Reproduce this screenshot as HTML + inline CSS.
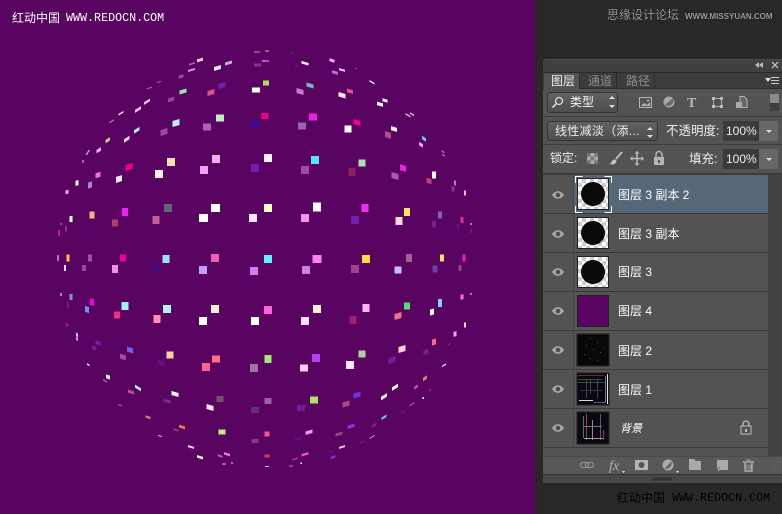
<!DOCTYPE html>
<html><head><meta charset="utf-8">
<style>
*{margin:0;padding:0;box-sizing:border-box}
html,body{width:782px;height:514px;overflow:hidden;background:#282828}
body{position:relative;font-family:"Liberation Sans","WenQuanYi Zen Hei","Noto Sans CJK SC",sans-serif}
.a{position:absolute}
.t{position:absolute;white-space:pre;font-size:12px;line-height:14px;color:#e8e8e8}
.l{color:#fff}
.row{position:absolute;left:543px;width:225px;height:39px;background:#535353;border-bottom:1px solid #3a3a3a}
.sel{position:absolute;left:31px;top:0;width:194px;height:38px;background:#566878}
.vl{position:absolute;left:30px;top:0;width:1px;height:38px;background:#444}
.th{position:absolute;left:577px;width:32px;height:32px;border:1px solid #222}
.chk{background-color:#fff;background-image:linear-gradient(45deg,#ccc 25%,transparent 25%,transparent 75%,#ccc 75%),linear-gradient(45deg,#ccc 25%,transparent 25%,transparent 75%,#ccc 75%);background-size:8px 8px;background-position:0 0,4px 4px}
.ci{position:absolute;left:3px;top:3px;width:24px;height:24px;border-radius:50%;background:#0a0a0a}
.box{position:absolute;border:1px solid #333;border-radius:3px;background:linear-gradient(#616161,#4e4e4e)}
svg{position:absolute;overflow:visible}
#s rect{transform-box:fill-box;transform-origin:center}
.u{transform:skewY(-16deg)}.d{transform:skewY(16deg)}.uu{transform:skewY(-32deg)}.dd{transform:skewY(32deg)}
</style></head><body>
<div class="a" style="left:0;top:0;width:534px;height:514px;background:#5a0462"></div>
<div class="a" style="left:534px;top:0;width:3px;height:514px;background:#2f2030"></div>
<div class="t" style="left:12px;top:11px;color:#fff;font-size:12px;line-height:14px">红动中国</div>
<div class="t" style="left:66px;top:11px;color:#fff;font-family:'Liberation Mono',monospace;font-size:11.7px;line-height:14px">WWW.REDOCN.COM</div>

<svg id="s" width="534" height="514" style="left:0;top:0">
<rect class="u" x="197" y="58.500" width="6" height="3" fill="#ffc0d0"/>
<rect class="u" x="189" y="63" width="6" height="1.500" fill="#c060c0"/>
<rect class="u" x="188" y="69" width="7" height="2" fill="#c0a0f0"/>
<rect class="u" x="225" y="61.500" width="7" height="3" fill="#c0b0c8"/>
<rect class="u" x="214" y="66" width="7" height="4" fill="#d8e8ff"/>
<rect x="254" y="51.500" width="6" height="1" fill="#d080b0"/>
<rect x="254" y="63.500" width="7" height="3" fill="#903080"/>
<rect x="262" y="60" width="3" height="2" fill="#e040e0"/>
<rect class="u" x="178.500" y="75" width="5" height="3" fill="#a05090"/>
<rect class="u" x="179.500" y="89.500" width="7" height="4" fill="#90e8b0"/>
<rect class="u" x="218.500" y="83" width="7" height="5" fill="#7020b0"/>
<rect class="u" x="207.500" y="90" width="7" height="5" fill="#e05080"/>
<rect x="252" y="87.500" width="8" height="5" fill="#fff"/>
<rect x="263" y="80.500" width="6" height="5" fill="#b0e060"/>
<rect class="u" x="168" y="97.500" width="6" height="4" fill="#a04090"/>
<rect class="uu" x="144" y="100.500" width="6" height="2.500" fill="#ffd0f0"/>
<rect class="uu" x="135" y="108" width="6" height="3" fill="#ffc0f0"/>
<rect class="uu" x="118.500" y="112.500" width="5" height="1.500" fill="#fff"/>
<rect class="uu" x="109.500" y="120.500" width="4.500" height="1.500" fill="#d060c0"/>
<rect class="u" x="147" y="87.500" width="5" height="1" fill="#c060c0"/>
<rect class="u" x="157" y="81.500" width="4" height="1" fill="#c060c0"/>
<rect class="u" x="172.500" y="120" width="7" height="6" fill="#c0f0ff"/>
<rect x="216" y="114.500" width="8" height="7" fill="#c0f0c0"/>
<rect x="203" y="123.500" width="8" height="7" fill="#b060b8"/>
<rect class="u" x="160.500" y="129" width="7" height="6" fill="#a04898"/>
<rect class="uu" x="134" y="128.500" width="5.500" height="3.500" fill="#c0e8ff"/>
<rect class="uu" x="124" y="137.500" width="5.500" height="3.500" fill="#ffd8f0"/>
<rect class="uu" x="105.500" y="138.500" width="4.500" height="3.500" fill="#c8d070"/>
<rect class="uu" x="96.500" y="148.500" width="4.500" height="3.500" fill="#f0b0f0"/>
<rect class="dd" x="87" y="150" width="1.500" height="5" style="transform:skewX(-30deg)" fill="#e0a0d0"/>
<rect x="82" y="160" width="2" height="3" fill="#d050a0"/>
<rect x="251" y="120" width="8" height="8" fill="#400a90"/>
<rect x="261.500" y="113" width="7" height="6" fill="#f00090"/>
<rect class="u" x="125.500" y="164" width="7" height="6" fill="#f00080"/>
<rect x="167" y="158" width="8" height="8" fill="#ffe0b0"/>
<rect x="155" y="170" width="8" height="8" fill="#fff0e0"/>
<rect x="212" y="155" width="8" height="8" fill="#f0b0f0"/>
<rect x="200" y="166" width="8" height="8" fill="#f0a0f0"/>
<rect x="251" y="164" width="8" height="8" fill="#7020b0"/>
<rect x="264" y="154" width="8" height="8" fill="#fff0ff"/>
<rect class="u" x="116" y="176" width="6" height="6" fill="#ffe8ff"/>
<rect class="u" x="95.500" y="172.500" width="5" height="5" fill="#f070d0"/>
<rect class="u" x="88" y="182" width="4" height="6" fill="#b080e0"/>
<rect class="u" x="75.500" y="180.500" width="3" height="5" fill="#fff"/>
<rect class="u" x="65.500" y="190" width="3" height="4" fill="#f0a0e0"/>
<rect x="164" y="204" width="8" height="8" fill="#606080"/>
<rect x="211" y="204" width="9" height="8" fill="#fff"/>
<rect x="199" y="214" width="9" height="8" fill="#fff"/>
<rect x="249" y="214" width="8" height="8" fill="#ffe8ff"/>
<rect x="264" y="204" width="8" height="8" fill="#ffffc0"/>
<rect x="122" y="208" width="6" height="8" fill="#f020f0"/>
<rect x="152.500" y="216" width="7" height="8" fill="#c06098"/>
<rect x="112" y="219.500" width="6" height="7" fill="#b04060"/>
<rect x="89.500" y="211.500" width="5" height="7" fill="#f0b880"/>
<rect x="69.500" y="216" width="3" height="6" fill="#fff"/>
<rect x="83.500" y="222.500" width="3" height="5" fill="#500a80"/>
<rect x="65" y="226.500" width="2" height="5" fill="#a03080"/>
<rect x="60.500" y="223" width="1" height="2" fill="#e090d0"/>
<rect x="58" y="230" width="2" height="6" fill="#c02080"/>

<rect x="66.500" y="254.500" width="3" height="7" fill="#ffc040"/>
<rect x="57.500" y="255" width="1" height="6" fill="#fff"/>
<rect x="88" y="254.500" width="4" height="7" fill="#a050a0"/>
<rect x="120" y="254.500" width="6" height="7" fill="#f000a0"/>
<rect x="162.500" y="255" width="7" height="8" fill="#a0e0ff"/>
<rect x="211" y="254" width="8" height="8" fill="#f060b0"/>
<rect x="264" y="255" width="8" height="8" fill="#60f0ff"/>
<rect x="64" y="265" width="2" height="6" fill="#ffe0f0"/>
<rect x="82" y="265" width="4" height="6" fill="#905090"/>
<rect x="112" y="265" width="6" height="8" fill="#f090e0"/>
<rect x="152.500" y="265" width="7" height="8" fill="#400a80"/>
<rect x="199" y="266" width="8" height="8" fill="#c0a0ff"/>
<rect x="250" y="267" width="8" height="8" fill="#d080f0"/>
<rect x="60.500" y="293" width="1" height="3" fill="#fff"/>
<rect x="69.500" y="294" width="3" height="6" fill="#8090e0"/>
<rect x="67" y="302.500" width="2" height="5" fill="#802080"/>
<rect x="90" y="298.500" width="4" height="7" fill="#f000e0"/>
<rect class="d" x="85" y="306.500" width="4" height="6" fill="#7090f0"/>
<rect x="121.500" y="302" width="7" height="8" fill="#a0f0f0"/>
<rect x="114" y="311.500" width="6" height="7" fill="#f03070"/>
<rect x="163" y="305" width="8" height="8" fill="#b0f0ff"/>
<rect x="153.500" y="315" width="7" height="8" fill="#ff90b0"/>
<rect x="211" y="305" width="8" height="8" fill="#fff0d0"/>
<rect x="199" y="317" width="8" height="8" fill="#fff"/>
<rect x="251" y="317" width="8" height="8" fill="#fff"/>
<rect x="264" y="306" width="8" height="8" fill="#ff60e0"/>
<rect class="d" x="65.500" y="323" width="3" height="4" fill="#802080"/>
<rect class="dd" x="76" y="333" width="2" height="4" fill="#c0c0ff"/>
<rect class="dd" x="76" y="337.500" width="2" height="3" fill="#e0a0e0"/>
<rect class="d" x="95.500" y="341" width="5" height="4" fill="#7020a0"/>
<rect class="d" x="92" y="346" width="4" height="4" fill="#7a2090"/>
<rect class="d" x="127" y="347.500" width="6" height="5" fill="#7060f0"/>
<rect class="d" x="120" y="354.500" width="6" height="5" fill="#a05090"/>
<rect x="166.500" y="351.500" width="7" height="7" fill="#ffd0a0"/>
<rect class="d" x="157.500" y="360.500" width="7" height="5" fill="#601080"/>
<rect x="212" y="355.500" width="8" height="7" fill="#ff7080"/>
<rect x="202" y="363" width="8" height="8" fill="#ff6090"/>
<rect x="250" y="364" width="8" height="8" fill="#a070a0"/>
<rect x="264.500" y="355" width="7" height="8" fill="#a0f070"/>
<rect class="dd" x="87" y="364" width="2.500" height="1.500" fill="#fff"/>
<rect class="d" x="106" y="375" width="4" height="4" fill="#d0e8e0"/>
<rect class="dd" x="103" y="380" width="4" height="1.500" fill="#c060a0"/>
<rect class="dd" x="135" y="386.500" width="6" height="3" fill="#c0f0ff"/>
<rect class="d" x="128" y="390.500" width="6" height="3" fill="#c05090"/>
<rect class="d" x="171.500" y="392" width="7" height="4" fill="#fff"/>
<rect class="d" x="163.500" y="399.500" width="7" height="3" fill="#703090"/>
<rect class="d" x="118" y="404.500" width="4" height="1.500" fill="#b03090"/>
<rect class="d" x="206.500" y="405" width="7" height="5" fill="#ffe8f0"/>
<rect x="216.500" y="396" width="7" height="6" fill="#705070"/>
<rect x="251" y="407" width="8" height="6" fill="#603070"/>
<rect x="264.500" y="398" width="7" height="6" fill="#a060a0"/>
<rect class="d" x="145.500" y="416" width="5" height="2.500" fill="#c08070"/>
<rect class="d" x="179" y="425.500" width="6" height="3" fill="#f07050"/>
<rect class="d" x="173.500" y="429" width="5" height="2" fill="#904080"/>
<rect x="218.500" y="429.500" width="7" height="5" fill="#c0f080"/>
<rect class="d" x="158" y="435.500" width="4" height="1" fill="#f0d0f0"/>
<rect class="d" x="188" y="446" width="6" height="2" fill="#ffe0f0"/>
<rect class="d" x="197" y="456" width="6" height="2.500" fill="#fff"/>
<rect class="d" x="224" y="453" width="6" height="2.500" fill="#f070d0"/>
<rect class="d" x="217.500" y="455" width="5" height="2" fill="#c060b0"/>
<rect x="222" y="463" width="4" height="2" fill="#c050a0"/>
<rect x="231" y="462.500" width="2" height="1" fill="#f0d0e0"/>
<rect x="251.500" y="439" width="7" height="4" fill="#804080"/>
<rect x="264.500" y="431.500" width="5" height="5" fill="#ff5090"/>
<rect x="264.500" y="454.500" width="5" height="3" fill="#f03060"/>
<rect x="265" y="466" width="4" height="1" fill="#ffc0e0"/>

<rect x="265" y="50.500" width="4" height="1" fill="#f0a0b0"/>
<rect x="265" y="60" width="4" height="2" fill="#c040f0"/>
<rect x="290" y="52.500" width="4" height="1" fill="#6a1a90"/>
<rect class="d" x="301.500" y="62" width="7" height="2.500" fill="#fff"/>
<rect x="295" y="65" width="4" height="2" fill="#640f88"/>
<rect class="d" x="329.500" y="59" width="5" height="3" fill="#f0b0e0"/>
<rect class="d" x="332" y="71" width="6" height="3" fill="#b070e0"/>
<rect class="d" x="339" y="69" width="6" height="2" fill="#ffd0e0"/>
<rect x="355" y="68" width="2" height="1" fill="#a04090"/>
<rect class="dd" x="369.500" y="81.500" width="5" height="1.500" fill="#fff"/>
<rect class="d" x="296.500" y="89" width="7" height="5" fill="#c080c8"/>
<rect class="d" x="306.500" y="83.500" width="7" height="4" fill="#60c0c0"/>
<rect class="d" x="347" y="89.500" width="6" height="3.500" fill="#f05090"/>
<rect class="d" x="338.500" y="93" width="7" height="4.500" fill="#ffe8f0"/>
<rect class="d" x="377" y="102.500" width="6" height="3.500" fill="#fff"/>
<rect class="d" x="382.500" y="99" width="5" height="3" fill="#fff"/>
<rect class="dd" x="405.500" y="114.500" width="5" height="1.500" fill="#f0c0e0"/>
<rect class="dd" x="410" y="113.500" width="4" height="1.500" fill="#f0c0e0"/>
<rect x="309" y="113.500" width="8" height="7" fill="#f020e0"/>
<rect x="298" y="122.500" width="8" height="7" fill="#a060b0"/>
<rect class="d" x="353.500" y="120" width="7" height="5" fill="#f00090"/>
<rect x="344.500" y="125.500" width="7" height="7" fill="#fff"/>
<rect class="d" x="391" y="127" width="6" height="4" fill="#fff"/>
<rect class="d" x="385" y="132" width="6" height="6" fill="#b04890"/>
<rect class="dd" x="422" y="137" width="4" height="3.500" fill="#60d0d0"/>
<rect class="dd" x="419" y="143" width="4" height="3.500" fill="#f0a0d0"/>
<rect class="dd" x="441.500" y="151" width="3" height="1.500" fill="#d060b0"/>
<rect class="dd" x="442" y="154.500" width="3" height="1.500" fill="#d060b0"/>
<rect x="311" y="156" width="8" height="8" fill="#60e0f0"/>
<rect x="301" y="166" width="8" height="8" fill="#a04ca0"/>
<rect x="358.500" y="159.500" width="7" height="7" fill="#b0e0b0"/>
<rect x="348.500" y="168" width="7" height="8" fill="#902060"/>
<rect class="d" x="400" y="165" width="6" height="6" fill="#f020e0"/>
<rect class="d" x="391.500" y="173" width="7" height="6" fill="#a060b0"/>
<rect x="432" y="171.500" width="4" height="7" fill="#fff"/>
<rect class="d" x="426.500" y="178.500" width="5" height="5" fill="#c04070"/>
<rect x="454" y="180.500" width="2" height="5" fill="#a080d0"/>
<rect x="451.500" y="186.500" width="3" height="5" fill="#903090"/>
<rect x="464" y="190.500" width="2" height="5" fill="#ffc0d0"/>
<rect x="313" y="202.500" width="8" height="9" fill="#fff"/>
<rect x="301" y="214" width="8" height="8" fill="#ff90f0"/>
<rect x="361.500" y="204" width="7" height="8" fill="#f030f0"/>
<rect x="351" y="216" width="8" height="8" fill="#7020b0"/>
<rect x="404" y="208" width="6" height="8" fill="#ffe060"/>
<rect x="395.500" y="217" width="7" height="8" fill="#ffd8d0"/>
<rect x="438" y="211.500" width="4" height="7" fill="#8060c0"/>
<rect x="432" y="220.500" width="4" height="7" fill="#702090"/>
<rect class="d" x="460.500" y="217" width="3" height="6" fill="#e03090"/>
<rect x="457" y="224" width="2" height="6" fill="#601088"/>
<rect x="470.500" y="223" width="1" height="2" fill="#fff"/>
<rect x="470.500" y="229" width="1" height="4" fill="#902080"/>

<rect x="312.500" y="255" width="9" height="8" fill="#ff80f0"/>
<rect x="302" y="266" width="8" height="8" fill="#d080e0"/>
<rect x="362" y="255" width="8" height="8" fill="#ffe040"/>
<rect x="351" y="265" width="8" height="8" fill="#a04090"/>
<rect x="406" y="254" width="6" height="8" fill="#a06090"/>
<rect x="394.500" y="266.500" width="7" height="7" fill="#c0c0ff"/>
<rect x="440" y="254.500" width="4" height="7" fill="#ffe060"/>
<rect x="432.500" y="265.500" width="5" height="7" fill="#7040a0"/>
<rect x="462.500" y="254.500" width="3" height="7" fill="#e020c0"/>
<rect x="458.500" y="265" width="3" height="6" fill="#904880"/>
<rect x="313" y="305" width="8" height="8" fill="#fff0d0"/>
<rect x="301" y="317" width="8" height="8" fill="#ffe0ff"/>
<rect x="362.500" y="304" width="7" height="8" fill="#ffb0f0"/>
<rect x="349.500" y="316" width="7" height="8" fill="#a02070"/>
<rect x="404" y="302.500" width="6" height="7" fill="#50e070"/>
<rect class="u" x="394.500" y="313" width="7" height="6" fill="#f07080"/>
<rect x="438" y="299" width="4" height="8" fill="#80d0ff"/>
<rect class="u" x="430" y="309" width="4" height="6" fill="#fff"/>
<rect class="u" x="460.500" y="294.500" width="3" height="5" fill="#ff70e0"/>
<rect x="470.500" y="293" width="1" height="2" fill="#fff"/>
<rect x="312" y="354" width="8" height="8" fill="#b040f0"/>
<rect x="300" y="364.500" width="8" height="7" fill="#ffd0f0"/>
<rect x="358.500" y="350.500" width="7" height="7" fill="#b0d0a0"/>
<rect x="346" y="361" width="8" height="8" fill="#ffe8f0"/>
<rect class="u" x="398.500" y="346" width="7" height="6" fill="#ffd0d0"/>
<rect class="u" x="388.500" y="357" width="7" height="6" fill="#702090"/>
<rect class="u" x="432" y="339" width="4" height="6" fill="#f07080"/>
<rect class="u" x="423.500" y="349.500" width="5" height="5" fill="#702090"/>
<rect x="464" y="322.500" width="2" height="5" fill="#ffe0c0"/>
<rect class="u" x="453.500" y="331.500" width="3" height="5" fill="#f0a0e0"/>
<rect class="uu" x="447.500" y="343.500" width="3" height="1.500" fill="#802080"/>
<rect class="uu" x="442" y="364.500" width="4" height="1.500" fill="#f0d0f0"/>
<rect x="310" y="396.500" width="8" height="7" fill="#b0e060"/>
<rect x="297" y="405" width="8" height="6" fill="#702090"/>
<rect class="u" x="353.500" y="392.500" width="7" height="5" fill="#7030f0"/>
<rect class="u" x="342.500" y="401.500" width="7" height="5" fill="#b04880"/>
<rect class="uu" x="392" y="385.500" width="6" height="3.500" fill="#fff"/>
<rect class="uu" x="381" y="395" width="6" height="3.500" fill="#fff"/>
<rect class="uu" x="423" y="376.500" width="4" height="3.500" fill="#e08060"/>
<rect class="uu" x="414" y="385.500" width="4" height="3" fill="#c05090"/>
<rect x="429" y="389" width="2" height="2" fill="#a02070"/>
<rect x="422.500" y="397" width="1.500" height="2" fill="#fff"/>
<rect class="uu" x="409.500" y="403.500" width="5" height="1.500" fill="#c04090"/>
<rect class="uu" x="401" y="411.500" width="4" height="1" fill="#802090"/>
<rect class="uu" x="381.500" y="416" width="5" height="2.500" fill="#70c0d0"/>
<rect class="uu" x="371.500" y="424" width="5" height="2.500" fill="#902080"/>
<rect class="u" x="347.500" y="424.500" width="7" height="3.500" fill="#9030e0"/>
<rect class="u" x="335.500" y="432.500" width="7" height="3" fill="#904880"/>
<rect class="u" x="305.500" y="430.500" width="7" height="3.500" fill="#ff90e0"/>
<rect class="u" x="294.500" y="437.500" width="7" height="3" fill="#601080"/>
<rect class="uu" x="369.500" y="436.500" width="5" height="1" fill="#f0b0e0"/>
<rect class="uu" x="360" y="441.500" width="4" height="1" fill="#902080"/>
<rect class="u" x="339" y="446" width="6" height="2" fill="#ffc0e0"/>
<rect class="u" x="330.500" y="456" width="5" height="2.500" fill="#8030e0"/>
<rect x="329" y="451.500" width="4" height="1" fill="#6a1890"/>
<rect class="u" x="301.500" y="453" width="7" height="2.500" fill="#f050c0"/>
<rect class="u" x="292" y="458" width="6" height="2" fill="#903080"/>
<rect x="289" y="465" width="4" height="2" fill="#904080"/>
<rect x="300.500" y="462.500" width="1.500" height="1.500" fill="#fff"/>
</svg>

<div class="t" style="left:607px;top:8px;font-size:12px;line-height:15px;color:#9c9c9c;text-shadow:0 0 1px #000">思缘设计论坛</div>
<div class="t" style="left:685px;top:11px;font-size:8px;line-height:12px;color:#9c9c9c;font-weight:bold;text-shadow:0 0 1px #000">WWW.MISSYUAN.COM</div>

<!-- panel -->
<div class="a" style="left:543px;top:59px;width:239px;height:424px;background:#535353;border-radius:3px 0 0 0"></div>
<div class="a" style="left:543px;top:59px;width:239px;height:13px;background:#414141;border-top:1px solid #4c4c4c;border-radius:3px 0 0 0"></div>
<div class="a" style="left:543px;top:72px;width:239px;height:17px;background:#3c3c3c;border-top:1px solid #2a2a2a;border-bottom:1px solid #2c2c2c"></div>
<div class="a" style="left:544px;top:73px;width:36px;height:16px;background:#535353;border-right:1px solid #2c2c2c"></div>
<div class="a" style="left:580px;top:73px;width:37px;height:15px;border-right:1px solid #2c2c2c"></div>
<div class="a" style="left:617px;top:73px;width:38px;height:15px;border-right:1px solid #2c2c2c"></div>
<div class="t" style="left:551px;top:74px;color:#f0f0f0">图层</div>
<div class="t" style="left:588px;top:74px;color:#8c8c8c">通道</div>
<div class="t" style="left:626px;top:74px;color:#8c8c8c">路径</div>
<svg width="782" height="100" style="left:0;top:0">
<path d="M759 62l-4 3 4 3zM763 62l-4 3 4 3z" fill="#bbb"/>
<path d="M772 62l6 6M778 62l-6 6" stroke="#ccc" stroke-width="1.200"/>
<path d="M765 78h6l-3 4z" fill="#ddd"/>
<path d="M771 77.500h8M771 80.500h8M771 83.500h8" stroke="#ccc"/>
</svg>

<div class="a" style="left:543px;top:116px;width:239px;height:1px;background:#3c3c3c"></div>
<div class="a" style="left:543px;top:144px;width:239px;height:1px;background:#3c3c3c"></div>
<div class="a" style="left:543px;top:173px;width:239px;height:2px;background:#3c3c3c"></div>

<div class="box" style="left:547px;top:92px;width:71px;height:21px"></div>
<div class="t" style="left:570px;top:95px;color:#f4f4f4">类型</div>
<div class="box" style="left:547px;top:121px;width:111px;height:20px"></div>
<div class="t" style="left:555px;top:124px;color:#ececec;letter-spacing:.3px">线性减淡（添...</div>
<div class="t" style="left:666px;top:124px;color:#eee;font-size:12.5px">不透明度:</div>
<div class="a" style="left:723px;top:121px;width:36px;height:20px;background:#3b3b3b"></div>
<div class="t" style="left:726px;top:124px;color:#eee">100%</div>
<div class="a" style="left:759px;top:121px;width:19px;height:20px;background:#676767"></div>
<div class="t" style="left:550px;top:151px;color:#eee">锁定:</div>
<div class="t" style="left:689px;top:152px;color:#eee;font-size:12.5px">填充:</div>
<div class="a" style="left:723px;top:149px;width:36px;height:20px;background:#3b3b3b"></div>
<div class="t" style="left:726px;top:152px;color:#eee">100%</div>
<div class="a" style="left:759px;top:149px;width:19px;height:20px;background:#676767"></div>

<svg width="782" height="175" style="left:0;top:0">
<circle cx="559" cy="101" r="3.500" fill="none" stroke="#ddd" stroke-width="1.300"/><path d="M556 104l-3.500 3.500" stroke="#ddd" stroke-width="1.600"/>
<path d="M610 99l3 -3 3 3zM610 105l3 3 3-3z" transform="translate(-1 0)" fill="#ddd"/>
<path d="M647 130l3-3 3 3zM647 135l3 3 3-3z" fill="#ddd"/>
<path d="M766 130h6l-3 3z" fill="#ddd"/><path d="M766 158h6l-3 3z" fill="#ddd"/>
<!-- filter icons -->
<rect x="639.500" y="97.500" width="12" height="10" fill="#555" stroke="#b4b4b4"/><path d="M641 106l3-3 3 2 3-3v4z" fill="#b4b4b4"/><circle cx="648" cy="100.500" r="1" fill="#ccc"/>
<circle cx="669" cy="102" r="5.500" fill="#a8a8a8"/><path d="M665 105l8-7a5.500 5.500 0 0 1-8 7z" fill="#6a6a6a"/>
<text x="687" y="107" font-family="Liberation Serif,serif" font-weight="bold" font-size="14" fill="#b8b8b8">T</text>
<rect x="713.500" y="98.500" width="8" height="8" fill="none" stroke="#aaa"/><path d="M712 97h3v3h-3zM720 97h3v3h-3zM712 105h3v3h-3zM720 105h3v3h-3z" fill="#bbb"/>
<path d="M740 96.500h4l3 3v8h-7z" fill="#666" stroke="#b4b4b4"/><rect x="736" y="102" width="6" height="6" fill="#aaa"/>
<rect x="770" y="94" width="9" height="9" fill="#8a8a8a"/><rect x="770" y="103" width="9" height="8" fill="#3e3e3e"/>
<!-- lock icons -->
<rect x="587" y="153" width="11" height="11" fill="#aaa"/><path d="M587 153h3.700v3.700h-3.700zM594.300 153h3.700v3.700h-3.700zM590.700 156.700h3.600v3.600h-3.600zM587 160.300h3.700v3.700h-3.700zM594.300 160.300h3.700v3.700h-3.700z" fill="#777"/>
<path d="M622 152l-6 7" stroke="#c4c4c4" stroke-width="1.800"/><path d="M608 164c3 0 3-1 4-3 1-1.500 3-2 4-1 1 1.500 0 4-3 4.500z" fill="#c4c4c4"/>
<path d="M637 152.500v12M631 158.500h12" stroke="#bbb" stroke-width="1.500"/><path d="M637 151l-2.500 2.500h5zM637 166l-2.500-2.500h5zM630 158.500l2.500-2.500v5zM644 158.500l-2.500-2.500v5z" fill="#bbb"/>
<rect x="654" y="157" width="10" height="8" fill="#b4b4b4"/><path d="M656 157v-2.500a3 3 0 0 1 6 0v2.500" fill="none" stroke="#b4b4b4" stroke-width="1.500"/><rect x="658" y="160" width="2" height="3" fill="#555"/>
</svg>

<!-- layers -->
<div class="a" style="left:768px;top:175px;width:14px;height:280px;background:#424242"></div>
<div class="row" style="top:175px"><div class="sel"></div><div class="vl"></div></div>
<div class="row" style="top:214px"><div class="vl"></div></div>
<div class="row" style="top:253px"><div class="vl"></div></div>
<div class="row" style="top:292px"><div class="vl"></div></div>
<div class="row" style="top:331px"><div class="vl"></div></div>
<div class="row" style="top:370px"><div class="vl"></div></div>
<div class="row" style="top:409px"><div class="vl"></div></div>

<div class="th chk" style="top:178px"><div class="ci"></div></div>
<div class="th chk" style="top:217px"><div class="ci"></div></div>
<div class="th chk" style="top:256px"><div class="ci"></div></div>
<div class="th" style="top:295px;background:#5a0462"></div>
<svg width="782" height="514" style="left:0;top:0">
<path d="M575.500 183v-6.500h7M604.500 176.500h7v6.500M575.500 206v6.500h7M604.500 212.500h7v-6.500" fill="none" stroke="#fff"/>
<g fill="#bbb">
<path d="M552 195c3-5 9-5 12 0-3 5-9 5-12 0z" fill="#a8a8a8"/><circle cx="558" cy="195" r="2.300" fill="#4e4e4e"/>
<path d="M552 234c3-5 9-5 12 0-3 5-9 5-12 0z" fill="#a8a8a8"/><circle cx="558" cy="234" r="2.300" fill="#4e4e4e"/>
<path d="M552 272c3-5 9-5 12 0-3 5-9 5-12 0z" fill="#a8a8a8"/><circle cx="558" cy="272" r="2.300" fill="#4e4e4e"/>
<path d="M552 311c3-5 9-5 12 0-3 5-9 5-12 0z" fill="#a8a8a8"/><circle cx="558" cy="311" r="2.300" fill="#4e4e4e"/>
<path d="M552 350c3-5 9-5 12 0-3 5-9 5-12 0z" fill="#a8a8a8"/><circle cx="558" cy="350" r="2.300" fill="#4e4e4e"/>
<path d="M552 389c3-5 9-5 12 0-3 5-9 5-12 0z" fill="#a8a8a8"/><circle cx="558" cy="389" r="2.300" fill="#4e4e4e"/>
<path d="M552 428c3-5 9-5 12 0-3 5-9 5-12 0z" fill="#a8a8a8"/><circle cx="558" cy="428" r="2.300" fill="#4e4e4e"/>
</g>
<!-- thumb layer 2 -->
<rect x="577" y="334" width="32" height="32" fill="#080808" stroke="#222"/>
<g fill="#4a4a4a"><rect x="590" y="338" width="1" height="1"/><rect x="597" y="342" width="1" height="1"/><rect x="586" y="345" width="1" height="1"/><rect x="593" y="349" width="1" height="1"/><rect x="600" y="352" width="1" height="1"/><rect x="584" y="354" width="1" height="1"/><rect x="590" y="358" width="1" height="1"/><rect x="597" y="360" width="1" height="1"/><rect x="604" y="347" width="1" height="1"/></g>
<!-- thumb layer 1 -->
<rect x="577" y="373" width="32" height="32" fill="#0a0810" stroke="#222"/>
<g fill="none" stroke-width="1">
<path d="M578 375.500h26" stroke="#802030"/><path d="M578 379.500h24M578 382.500h28" stroke="#305040"/>
<path d="M607.500 374v30" stroke="#e8e8e8"/><path d="M605.500 376v26" stroke="#7080a0"/>
<path d="M579 400.500h14" stroke="#dddddd"/><path d="M594 402.500h12" stroke="#506090"/>
<path d="M586.500 380v18M597.500 380v18M590.500 380v14" stroke="#3a4a4a"/>
<path d="M580 390.500h22" stroke="#403040"/></g>
<!-- thumb background -->
<rect x="577" y="412" width="32" height="32" fill="#0a0810" stroke="#222"/>
<g fill="none" stroke-width="1">
<path d="M583.500 416v22" stroke="#4a7a5a"/><path d="M586.500 414v26" stroke="#a04050"/>
<path d="M592.500 420v20" stroke="#a08890"/><path d="M600.500 414v26" stroke="#505a80"/>
<path d="M584 426.500h18" stroke="#7a7a70"/><path d="M584 438.500h20" stroke="#a0a0a0"/>
<path d="M603.500 430v10" stroke="#904050"/></g>
<!-- bg lock -->
<rect x="741" y="426" width="10" height="8" fill="none" stroke="#bbb"/><path d="M743 426v-2a3 3 0 0 1 6 0v2" fill="none" stroke="#bbb" stroke-width="1.300"/><rect x="745" y="429" width="2" height="3" fill="#bbb"/>
</svg>
<div class="t l" style="left:618px;top:188px">图层 3 副本 2</div>
<div class="t l" style="left:618px;top:227px">图层 3 副本</div>
<div class="t l" style="left:618px;top:265px">图层 3</div>
<div class="t l" style="left:618px;top:304px">图层 4</div>
<div class="t l" style="left:618px;top:344px">图层 2</div>
<div class="t l" style="left:618px;top:383px">图层 1</div>
<div class="t l" style="left:620px;top:422px;font-style:italic;font-size:11px">背景</div>

<!-- bottom bar -->
<div class="a" style="left:543px;top:448px;width:225px;height:8px;background:#535353"></div>
<div class="a" style="left:768px;top:448px;width:14px;height:8px;background:#424242"></div>
<div class="a" style="left:543px;top:456px;width:239px;height:19px;background:#585858;border-top:1px solid #4a4a4a;border-bottom:1px solid #333"></div>
<div class="a" style="left:543px;top:475px;width:239px;height:8px;background:#484848"></div>
<svg width="782" height="514" style="left:0;top:0">
<rect x="580.500" y="462.500" width="8" height="5" rx="2.500" fill="none" stroke="#8e8e8e" stroke-width="1.300"/><rect x="585.500" y="462.500" width="8" height="5" rx="2.500" fill="none" stroke="#8e8e8e" stroke-width="1.300"/>
<text x="609" y="470" font-family="Liberation Serif,serif" font-style="italic" font-size="14" fill="#b0b0b0">fx</text>
<path d="M622 471h3l-1.500 2z" fill="#ddd"/>
<rect x="635" y="460" width="13" height="10" fill="#b4b4b4"/><circle cx="641.500" cy="465" r="3" fill="#555"/>
<circle cx="668" cy="465" r="5.500" fill="#aaa"/><path d="M664.500 468.500l7-7a5.500 5.500 0 0 1-7 7z" fill="#666"/>
<path d="M677 471h3l-1.500 2z" transform="translate(-1 0)" fill="#ddd"/>
<path d="M689 459h5l2 2h5v9h-12z" fill="#aaa"/>
<path d="M717 460h11v10h-8v-3h-3z" fill="#aaa"/><path d="M717 468h2v3" fill="none" stroke="#ccc"/>
<path d="M743 462h11M745 463v8h7v-8" fill="none" stroke="#b8b8b8" stroke-width="1.300"/><path d="M746.500 460h4" stroke="#b8b8b8"/><path d="M747 464.500v5M749 464.500v5M751 464.500v5" stroke="#b8b8b8" stroke-width=".8"/>
<g fill="#707070"><rect x="778" y="463" width="1" height="1"/><rect x="775" y="466" width="1" height="1"/><rect x="778" y="466" width="1" height="1"/><rect x="772" y="469" width="1" height="1"/><rect x="775" y="469" width="1" height="1"/><rect x="778" y="469" width="1" height="1"/></g>
<path d="M653 477.500v3M655 477.500v3M657 477.500v3M659 477.500v3M661 477.500v3M663 477.500v3M665 477.500v3M667 477.500v3M669 477.500v3M671 477.500v3" stroke="#222" stroke-width="1"/>
</svg>
<div class="t" style="left:617px;top:491px;color:#000">红动中国</div>
<div class="t" style="left:672px;top:491px;color:#000;font-family:'Liberation Mono',monospace;font-size:11.7px">WWW.REDOCN.COM</div>
</body></html>
